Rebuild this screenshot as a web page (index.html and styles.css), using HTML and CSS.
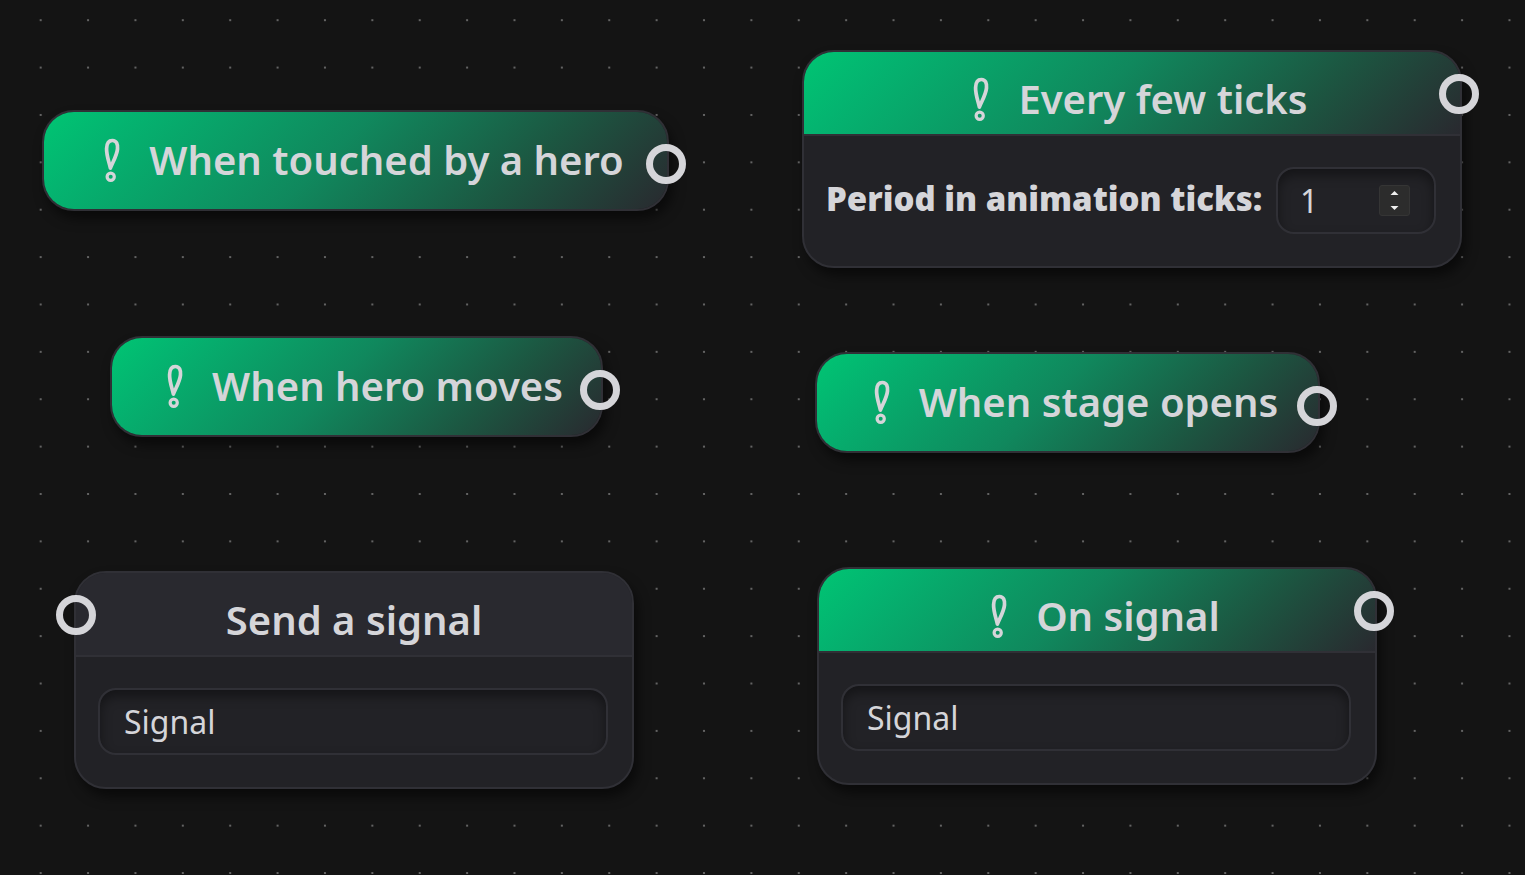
FILE: index.html
```html
<!DOCTYPE html>
<html lang="en">
<head>
    <meta charset="UTF-8">
    <meta name="viewport" content="width=device-width, initial-scale=1.0">
    <title>Event nodes</title>
    <link rel="stylesheet" href="styles.css">
</head>
<body>
    <svg class="defs" aria-hidden="true">
        <symbol id="event-icon" viewBox="0 0 48 48">
            <path stroke-width="3.7" d="M23.4 32C22 26 19.3 19 19.6 12.5C19.8 7 22.3 4.4 25.5 4.5C29.5 4.6 30.9 8 30.5 13C30 19 26.4 25 23.4 32Z"/>
            <circle stroke-width="3.2" cx="23.7" cy="40.7" r="3.6"/>
        </symbol>
    </svg>
    <main class="canvas">
        <svg class="grid" aria-hidden="true">
            <pattern id="dots" width="20" height="20" patternUnits="userSpaceOnUse" patternTransform="translate(17 -3.5) scale(2.369)">
                <circle cx="10" cy="10" r="0.46"/>
            </pattern>
            <rect width="100%" height="100%" fill="url(#dots)"/>
        </svg>

        <section class="node simple" style="left: 42px; top: 110px; width: 627px">
            <header class="node-header event">
                <svg class="icon"><use href="#event-icon"/></svg>
                <h2>When touched by a hero</h2>
            </header>
            <button class="handle out" aria-label="Output"></button>
        </section>

        <section class="node" style="left: 802px; top: 50px; width: 660px">
            <header class="node-header event">
                <svg class="icon"><use href="#event-icon"/></svg>
                <h2>Every few ticks</h2>
            </header>
            <div class="node-body">
                <label for="period">Period in animation ticks:</label>
                <div class="field number">
                    <input id="period" type="number" value="1" min="1">
                    <div class="stepper">
                        <button id="up" aria-label="Increase"><svg viewBox="0 0 10 5"><path d="M5 0L10 5H0Z"/></svg></button>
                        <button id="down" aria-label="Decrease"><svg viewBox="0 0 10 5"><path d="M0 0H10L5 5Z"/></svg></button>
                    </div>
                </div>
            </div>
            <button class="handle out" aria-label="Output"></button>
        </section>

        <section class="node simple" style="left: 110px; top: 336px; width: 493px">
            <header class="node-header event">
                <svg class="icon"><use href="#event-icon"/></svg>
                <h2>When hero moves</h2>
            </header>
            <button class="handle out" aria-label="Output"></button>
        </section>

        <section class="node simple" style="left: 815px; top: 352px; width: 505px">
            <header class="node-header event">
                <svg class="icon"><use href="#event-icon"/></svg>
                <h2>When stage opens</h2>
            </header>
            <button class="handle out" aria-label="Output"></button>
        </section>

        <section class="node" style="left: 74px; top: 571px; width: 560px">
            <header class="node-header">
                <h2>Send a signal</h2>
            </header>
            <div class="node-body">
                <input class="field" type="text" value="Signal" aria-label="Signal to send">
            </div>
            <button class="handle in" aria-label="Input"></button>
        </section>

        <section class="node" style="left: 817px; top: 567px; width: 560px">
            <header class="node-header event">
                <svg class="icon"><use href="#event-icon"/></svg>
                <h2>On signal</h2>
            </header>
            <div class="node-body">
                <input class="field" type="text" value="Signal" aria-label="Signal to wait for">
            </div>
            <button class="handle out" aria-label="Output"></button>
        </section>
    </main>
    <script>
        const period = document.getElementById("period");
        document.getElementById("up").addEventListener("click", () => period.stepUp());
        document.getElementById("down").addEventListener("click", () => period.stepDown());
    </script>
</body>
</html>
```
FILE: styles.css
```css
* {
    box-sizing: border-box;
}
body {
    margin: 0;
    background-color: #141414;
    color: #d5d5d9;
    font-family: "Noto Sans", sans-serif;
}
button, input {
    font: inherit;
    color: inherit;
    padding: 0;
    border: none;
    background: none;
}
.defs {
    display: none;
}
.canvas {
    position: relative;
    height: 100vh;
    overflow: hidden;
}
.grid {
    display: block;
    width: 100%;
    height: 100%;
}
.grid circle {
    fill: #777;
}
.node {
    position: absolute;
    border: 2px solid #303036;
    border-radius: 32px;
    background-color: #222226;
    box-shadow: 4px 8px 12px rgba(0, 0, 0, 0.5);
}
.node-header {
    display: flex;
    align-items: center;
    justify-content: center;
    gap: 14px;
    height: 84px;
    padding-top: 12px;
    border-bottom: 2px solid #303036;
    border-radius: 30px 30px 0 0;
    background-color: #29292f;
}
.node-header.event {
    background-image: linear-gradient(135deg, #00c573, #04b470 12%, #10885d 46%, #1c5641 75%, #29292f);
}
.simple .node-header {
    height: 97px;
    padding: 0 0 2px;
    border-bottom: none;
    border-radius: 30px;
}
h2 {
    margin: 0;
    font-size: 40px;
    font-weight: 600;
    line-height: 48px;
    white-space: nowrap;
}
.icon {
    flex: none;
    width: 48px;
    height: 48px;
    fill: none;
    stroke: #d5d5d9;
    stroke-linejoin: round;
}
.node-body {
    display: flex;
    align-items: center;
    gap: 12px;
    padding: 31px 24px 32px 22px;
    font-size: 32px;
}
label {
    flex: 1;
    font-size: 33px;
    font-weight: 900;
    line-height: 40px;
    padding-bottom: 4px;
    white-space: nowrap;
}
.field {
    width: 100%;
    height: 67px;
    padding: 0 24px;
    border: 2px solid #303036;
    border-radius: 18px;
    box-shadow: inset 0 6px 12px rgba(0, 0, 0, 0.4);
}
.field.number {
    display: flex;
    align-items: center;
    flex: none;
    width: 160px;
    padding: 0 24px 0 22px;
}
.number input {
    flex: 1;
    width: 0;
    appearance: textfield;
}
.number input::-webkit-inner-spin-button {
    display: none;
}
.stepper {
    display: flex;
    flex-direction: column;
    width: 31px;
    height: 31px;
    border: 1px solid #353535;
    border-radius: 3px;
    background-color: #2c2c2c;
}
.stepper button {
    display: flex;
    flex: 1;
    align-items: center;
    justify-content: center;
}
.stepper svg {
    width: 9px;
    height: 4px;
    fill: #eee;
}
.handle {
    position: absolute;
    top: 22px;
    width: 40px;
    height: 40px;
    border: 7px solid #d5d5d9;
    border-radius: 50%;
    cursor: crosshair;
}
.simple .handle {
    top: 32px;
}
.handle.out {
    right: -19px;
}
.handle.in {
    left: -20px;
}
```
